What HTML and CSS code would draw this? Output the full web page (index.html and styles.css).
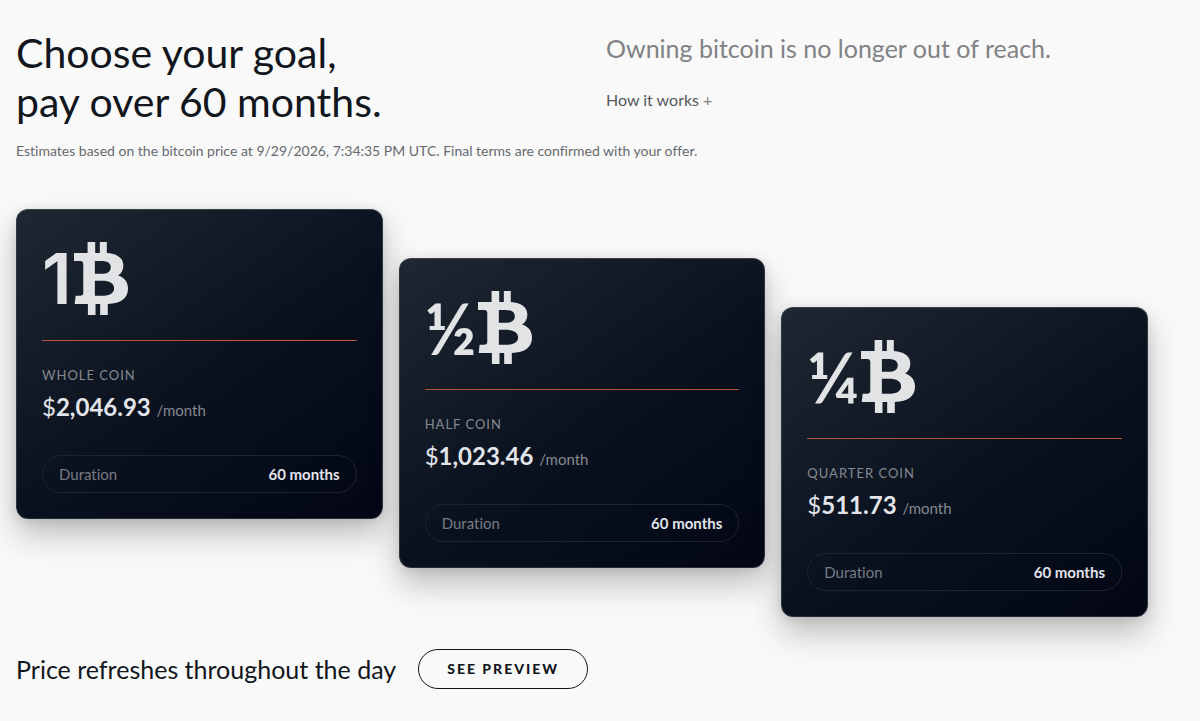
FILE: index.html
```
<!DOCTYPE html>
<html lang="en">
<head>
    <meta charset="UTF-8">
    <meta name="viewport" content="width=device-width, initial-scale=1.0">
    <title>Choose your goal</title>
    <link rel="stylesheet" href="styles.css">
</head>
<body>

<svg class="defs" aria-hidden="true">
    <symbol id="bitcoin" viewBox="0 0 163 220">
        <path fill-rule="evenodd" d="M41 0H64V33H78V0H99V33C130 35 149 48 149 71C149 85 143 95 133 101C152 107 163 120 163 140C163 170 142 185 102 187V220H79V187H65V220H42V187H2L5 162H18C25 162 28 159 28 152V66C28 60 25 57 19 57H0V33H41ZM63 57V96H82C101 96 111 89 111 76C111 63 101 57 82 57ZM63 117V162H84C108 162 121 154 121 140C121 125 108 117 84 117Z"/>
    </symbol>
</svg>

<main>
    <header class="intro">
        <h1>Choose your goal,<br>pay over 60 months.</h1>
        <div class="aside">
            <p class="lead">Owning bitcoin is no longer out of reach.</p>
            <button type="button" class="how">How it works <span>+</span></button>
        </div>
    </header>
    <p class="note">Estimates based on the bitcoin price at 9/29/2026, 7:34:35 PM UTC. Final terms are confirmed with your offer.</p>

    <section class="cards">
        <article class="card">
            <div class="amount amount-whole">1<svg class="coin" aria-hidden="true"><use href="#bitcoin"/></svg></div>
            <h2>Whole coin</h2>
            <p class="price"><span class="currency">$</span>2,046.93 <small>/month</small></p>
            <dl class="duration"><dt>Duration</dt><dd>60 months</dd></dl>
        </article>
        <article class="card card-half">
            <div class="amount">½<svg class="coin" aria-hidden="true"><use href="#bitcoin"/></svg></div>
            <h2>Half coin</h2>
            <p class="price"><span class="currency">$</span>1,023.46 <small>/month</small></p>
            <dl class="duration"><dt>Duration</dt><dd>60 months</dd></dl>
        </article>
        <article class="card card-quarter">
            <div class="amount">¼<svg class="coin" aria-hidden="true"><use href="#bitcoin"/></svg></div>
            <h2>Quarter coin</h2>
            <p class="price"><span class="currency">$</span>511.73 <small>/month</small></p>
            <dl class="duration"><dt>Duration</dt><dd>60 months</dd></dl>
        </article>
    </section>

    <footer class="cta">
        <p>Price refreshes throughout the day</p>
        <button type="button" class="preview">See preview</button>
    </footer>
</main>

</body>
</html>
```
FILE: styles.css
```
* {
    box-sizing: border-box;
}

body {
    margin: 0;
    background-color: #f9f9f9;
    color: #11151c;
    font-family: Lato, "Open Sans", sans-serif;
    font-variant-ligatures: none;
}
h1, h2, p, dl, dd {
    margin: 0;
    font-weight: 400;
}
button {
    font-family: inherit;
    color: inherit;
    background: none;
    cursor: pointer;
}
.defs {
    display: none;
}

main {
    padding: 28px 52px 24px 16px;
}

.intro {
    display: grid;
    grid-template-columns: 1fr 1fr;
    gap: 48px;
}
h1 {
    font-size: 41px;
    line-height: 49px;
    white-space: nowrap;
}
.lead {
    font-size: 25px;
    line-height: 40px;
    color: #808285;
    white-space: nowrap;
}
.how {
    display: block;
    margin-top: 20px;
    padding: 0;
    border: 0;
    font-size: 16px;
    line-height: 24px;
    color: #55585d;
}
.how span {
    color: #808285;
}
.note {
    margin-top: 15px;
    font-size: 14px;
    line-height: 20px;
    color: #666a70;
}

.cards {
    display: grid;
    grid-template-columns: repeat(3, 1fr);
    align-items: start;
    gap: 16px;
    margin-top: 48px;
}
.card {
    padding: 25px;
    border: 1px solid #30363f;
    border-color: #3b4048 #30363f #262b3a;
    border-radius: 12px;
    background: linear-gradient(145deg, #1f2733 0%, #0a111e 55%, #020615 100%);
    box-shadow: 0 16px 32px rgba(0, 0, 0, 0.24), 0 2px 12px rgba(0, 0, 0, 0.1);
    color: #e2e5ec;
}
.card-half {
    margin-top: 49px;
}
.card-quarter {
    margin-top: 98px;
}

.amount {
    display: flex;
    align-items: center;
    gap: 2px;
    height: 106px;
    padding-bottom: 18px;
    border-bottom: 1px solid #b3563c;
    color: #e1e3e5;
    font-size: 70px;
    font-weight: 700;
    line-height: 72px;
}
/* Inter's 1 has no foot */
.amount-whole {
    font-family: Inter, sans-serif;
    font-weight: 600;
}
.coin {
    width: 54px;
    height: 73px;
    fill: #e1e3e5;
}

.card h2 {
    margin-top: 24px;
    font-size: 13px;
    line-height: 20px;
    letter-spacing: 1px;
    text-transform: uppercase;
    color: #858991;
}
.price {
    margin-top: 6px;
    font-size: 24px;
    font-weight: 700;
    line-height: 32px;
}
.currency {
    font-weight: 400;
}
.price small {
    font-size: 15px;
    font-weight: 400;
    color: #858991;
}

.duration {
    display: flex;
    justify-content: space-between;
    margin-top: 29px;
    padding: 8px 16px;
    border: 1px solid #1e232e;
    border-radius: 19px;
    font-size: 15px;
    line-height: 20px;
}
.duration dt {
    color: #777b84;
}
.duration dd {
    font-weight: 700;
}

.cta {
    display: flex;
    align-items: center;
    gap: 22px;
    margin-top: 32px;
}
.cta p {
    font-size: 25px;
    line-height: 32px;
}
.preview {
    padding: 10px 28px;
    border: 1px solid #11151c;
    border-radius: 20px;
    font-size: 14px;
    font-weight: 900;
    line-height: 18px;
    letter-spacing: 2px;
    text-transform: uppercase;
}
```
